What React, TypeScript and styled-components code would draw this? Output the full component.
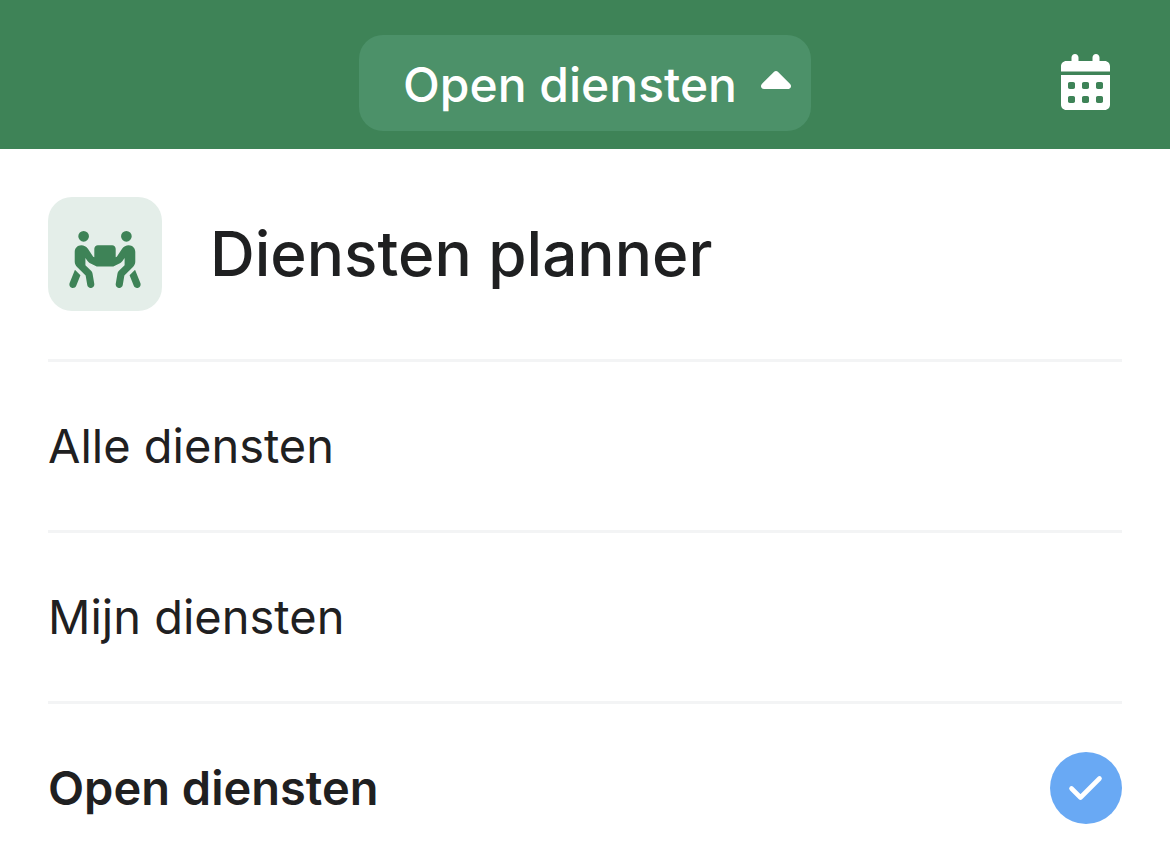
import React, { useState } from "react";
import styled, { createGlobalStyle } from "styled-components";
import { FaCalendarDays, FaCaretUp, FaPeopleCarryBox } from "react-icons/fa6";

const GlobalStyle = createGlobalStyle`
  *, *::before, *::after { box-sizing: border-box; }
  body {
    margin: 0;
    background: #ffffff;
    color: #1f2021;
    font-family: Inter, "Liberation Sans", sans-serif;
  }
  button { font: inherit; color: inherit; border: 0; background: none; padding: 0; cursor: pointer; }
`;

const Header = styled.header`
  display: grid;
  grid-template-columns: 1fr auto 1fr;
  align-items: center;
  padding: 35px 60px 18px;
  background: #3e8357;
  color: #ffffff;
`;

const ViewButton = styled.button`
  && {
    grid-column: 2;
    display: flex;
    align-items: center;
    gap: 24px;
    min-height: 96px;
    padding: 0 20px 0 44px;
    border-radius: 24px;
    background: #4c9169;
    font-size: 48px;
    font-weight: 500;
    line-height: 60px;
    white-space: nowrap;
  }
`;

const ViewLabel = styled.span`
  padding-top: 4px;
`;

const CaretIcon = styled(FaCaretUp)`
  width: 30px;
  height: 48px;
`;

const CalendarButton = styled.button`
  && {
    display: flex;
    justify-self: end;
    padding-bottom: 2px;
  }
`;

const CalendarIcon = styled(FaCalendarDays)`
  width: 49px;
  height: 56px;
`;

const Menu = styled.main`
  padding: 0 48px;
`;

const TitleRow = styled.div`
  display: flex;
  align-items: center;
  gap: 48px;
  padding: 48px 0;
`;

const AppTile = styled.div`
  display: flex;
  flex: none;
  justify-content: center;
  width: 114px;
  height: 114px;
  padding-top: 34px;
  border-radius: 24px;
  background: #e4eee9;
  color: #3e8357;
`;

const CarryIcon = styled(FaPeopleCarryBox)`
  width: 72px;
  height: 57px;
`;

const Title = styled.h1`
  margin: 0;
  font-size: 62px;
  font-weight: 500;
  line-height: 80px;
`;

const ViewList = styled.ul`
  margin: 0;
  padding: 0;
  list-style: none;
`;

const ViewItem = styled.li`
  border-top: 3px solid #f3f4f5;
`;

const ViewOption = styled.button<{ $active: boolean }>`
  && {
    display: flex;
    align-items: center;
    justify-content: space-between;
    width: 100%;
    padding: 48px 0;
    font-size: 47px;
    font-weight: ${({ $active }) => ($active ? 600 : 400)};
    line-height: 72px;
    text-align: left;
  }

  ${ViewItem}:last-child && {
    padding-bottom: 24px;
  }
`;

const CheckBadge = styled.span`
  display: flex;
  width: 72px;
  height: 72px;
  border-radius: 50%;
  background: #69a9f4;
`;

const views = ["Alle diensten", "Mijn diensten", "Open diensten"];

export default function App() {
  const [selected, setSelected] = useState("Open diensten");

  return (
    <>
      <GlobalStyle />
      <Header>
        <ViewButton type="button" aria-expanded="true">
          <ViewLabel>{selected}</ViewLabel>
          <CaretIcon aria-hidden="true" />
        </ViewButton>
        <CalendarButton type="button" aria-label="Kalender">
          <CalendarIcon aria-hidden="true" />
        </CalendarButton>
      </Header>
      <Menu>
        <TitleRow>
          <AppTile>
            <CarryIcon aria-hidden="true" />
          </AppTile>
          <Title>Diensten planner</Title>
        </TitleRow>
        <ViewList>
          {views.map((view) => (
            <ViewItem key={view}>
              <ViewOption
                type="button"
                $active={view === selected}
                aria-pressed={view === selected}
                onClick={() => setSelected(view)}
              >
                {view}
                {view === selected && (
                  <CheckBadge>
                    <svg width="72" height="72" viewBox="0 0 72 72" fill="none" aria-hidden="true">
                      <path
                        d="M21.5 36.5 30.5 45.5 49.5 26.5"
                        stroke="#ffffff"
                        strokeWidth="4.6"
                        strokeLinecap="round"
                        strokeLinejoin="round"
                      />
                    </svg>
                  </CheckBadge>
                )}
              </ViewOption>
            </ViewItem>
          ))}
        </ViewList>
      </Menu>
    </>
  );
}
